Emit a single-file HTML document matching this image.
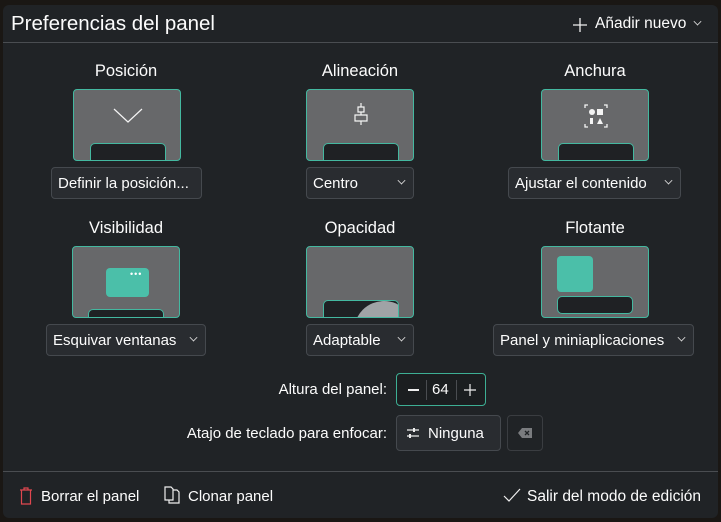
<!DOCTYPE html>
<html><head><meta charset="utf-8"><style>
*{box-sizing:border-box;margin:0;padding:0}
body{width:721px;height:522px;background:#1a1714;font-family:"Liberation Sans","DejaVu Sans",sans-serif;color:#fcfcfc;position:relative;overflow:hidden}
.win{position:absolute;left:3px;top:5px;width:715px;height:513px;background:#202326;border-radius:6px}
.abs{position:absolute}
.t{position:absolute;white-space:nowrap}
.sep{position:absolute;left:3px;width:715px;height:1px;background:#4a4d51}
.box{position:absolute;width:108px;height:72px;background:#67686a;border:1px solid #44b8a0;border-radius:4px;overflow:hidden}
.pnl{position:absolute;left:16px;width:76px;height:18px;bottom:-1px;background:#1f2124;border:1.5px solid #44b8a0;border-radius:5px 5px 0 0}
.btn{position:absolute;height:32px;background:#292c30;border:1px solid #45494e;border-radius:4px;font-size:15px;line-height:31px;padding-left:6px;white-space:nowrap}
.chev{position:absolute;right:8px;top:9px;width:7px;height:7px;border-right:1.2px solid #ddd;border-bottom:1.2px solid #ddd;transform:rotate(45deg) scale(.8)}
.lbl{font-size:16.5px;text-align:center;width:200px;margin-left:-100px}
</style></head><body>
<div class="win"></div>
<div class="t" style="left:11px;top:12px;font-size:20.5px">Preferencias del panel</div>
<svg class="abs" style="left:572px;top:17px" width="16" height="16"><path d="M8 1V15M1 8H15" stroke="#eee" stroke-width="1.3"/></svg>
<div class="t" style="left:595px;top:15px;font-size:15.5px">Añadir nuevo</div>
<div class="chev" style="left:694px;top:18px;right:auto"></div>
<div class="sep" style="top:42px"></div>

<div class="t lbl" style="left:126px;top:62px">Posición</div>
<div class="t lbl" style="left:360px;top:62px">Alineación</div>
<div class="t lbl" style="left:595px;top:62px">Anchura</div>
<div class="box" style="left:73px;top:89px"><svg class="abs" style="left:39px;top:18px" width="30" height="16"><path d="M1 1L15 14L29 1" stroke="#f4f4f4" fill="none" stroke-width="1.2"/></svg><div class="pnl"></div></div>
<div class="box" style="left:306px;top:89px"><svg class="abs" style="left:44px;top:13px" width="20" height="28"><path d="M10 0V4M7 4H13V9H7ZM10 9V12M4 12H16V18H4ZM10 18V22" stroke="#f4f4f4" fill="none" stroke-width="1.2"/></svg><div class="pnl"></div></div>
<div class="box" style="left:541px;top:89px"><svg class="abs" style="left:42px;top:14px" width="24" height="24"><path d="M1 4V1H4M20 1H23V4M1 20V23H4M20 23H23V20" stroke="#f4f4f4" fill="none" stroke-width="1.3"/><circle cx="8" cy="8" r="3" fill="#f4f4f4"/><rect x="13" y="5" width="6" height="6" fill="#f4f4f4"/><rect x="6" y="14" width="3" height="6" fill="#f4f4f4"/><path d="M13 20L16 14L19 20Z" fill="#f4f4f4"/></svg><div class="pnl"></div></div>
<div class="btn" style="left:51px;top:167px;width:151px">Definir la posición...</div>
<div class="btn" style="left:306px;top:167px;width:108px">Centro<div class="chev"></div></div>
<div class="btn" style="left:508px;top:167px;width:173px">Ajustar el contenido<div class="chev"></div></div>

<div class="t lbl" style="left:126px;top:219px">Visibilidad</div>
<div class="t lbl" style="left:360px;top:219px">Opacidad</div>
<div class="t lbl" style="left:595px;top:219px">Flotante</div>
<div class="box" style="left:72px;top:246px"><div class="abs" style="left:33px;top:21px;width:43px;height:29px;background:#4bbfa9;border-radius:4px"></div><div class="abs" style="left:57px;top:25px;font-size:9px;color:#fff;letter-spacing:1px;line-height:4px">•••</div><div class="abs" style="left:15px;top:62px;width:76px;height:12px;background:#1f2124;border:1.5px solid #44b8a0;border-radius:5px 5px 0 0"></div></div>
<div class="box" style="left:306px;top:246px"><div class="pnl" style="overflow:hidden"><div class="abs" style="left:30px;top:0;width:60px;height:60px;border-radius:50%;background:#a0a3a6"></div></div></div>
<div class="box" style="left:541px;top:246px"><div class="abs" style="left:15px;top:9px;width:36px;height:36px;background:#4bbfa9;border-radius:4px"></div><div class="abs" style="left:15px;top:49px;width:76px;height:18px;background:#1f2124;border:1.5px solid #44b8a0;border-radius:5px"></div></div>
<div class="btn" style="left:46px;top:324px;width:160px">Esquivar ventanas<div class="chev"></div></div>
<div class="btn" style="left:306px;top:324px;width:108px">Adaptable<div class="chev"></div></div>
<div class="btn" style="left:493px;top:324px;width:201px">Panel y miniaplicaciones<div class="chev"></div></div>

<div class="t" style="left:0;width:387px;text-align:right;top:381px;font-size:15px">Altura del panel:</div>
<div class="abs" style="left:396px;top:373px;width:90px;height:33px;background:#1b1e20;border:1px solid #3daf94;border-radius:4px">
<div class="abs" style="left:11px;top:15px;width:11px;height:2px;background:#eee"></div>
<div class="abs" style="left:29px;top:6px;width:1px;height:20px;background:#4a4d51"></div>
<div class="t" style="left:35px;top:7px;font-size:15px">64</div>
<div class="abs" style="left:59px;top:6px;width:1px;height:20px;background:#4a4d51"></div>
<svg class="abs" style="left:66px;top:9px" width="14" height="14"><path d="M7 1V13M1 7H13" stroke="#eee" stroke-width="1.2"/></svg></div>
<div class="t" style="left:0;width:387px;text-align:right;top:425px;font-size:15px">Atajo de teclado para enfocar:</div>
<div class="btn" style="left:396px;top:415px;width:105px;height:36px;line-height:36px;padding-left:31px">Ninguna</div>
<svg class="abs" style="left:406px;top:426px" width="14" height="14"><path d="M1 4H13M1 10H13" stroke="#eee" stroke-width="1.2"/><rect x="7" y="2" width="2" height="4" fill="#eee"/><rect x="3" y="8" width="2" height="4" fill="#eee"/></svg>
<div class="abs" style="left:507px;top:415px;width:36px;height:36px;border:1px solid #3a3d41;border-radius:4px"></div>
<svg class="abs" style="left:517px;top:427px" width="16" height="12"><path d="M5 1H15V11H5L1 6Z" fill="#7a7c7f"/><path d="M8 4L12 8M12 4L8 8" stroke="#202326" stroke-width="1.3"/></svg>

<div class="sep" style="top:471px"></div>
<svg class="abs" style="left:19px;top:487px" width="14" height="18"><path d="M1 3H13M5 3V1H9V3M2.5 3V17H11.5V3" stroke="#e0474f" fill="none" stroke-width="1.2"/></svg>
<div class="t" style="left:41px;top:488px;font-size:15px">Borrar el panel</div>
<svg class="abs" style="left:164px;top:486px" width="16" height="18"><path d="M1 1H7L9 3V14H1Z M9 4H13L15 6V17H5V14" stroke="#eee" fill="none" stroke-width="1.2"/></svg>
<div class="t" style="left:188px;top:488px;font-size:15px">Clonar panel</div>
<svg class="abs" style="left:503px;top:488px" width="18" height="14"><path d="M1 8L6 13L17 1" stroke="#eee" fill="none" stroke-width="1.2"/></svg>
<div class="t" style="left:527px;top:488px;font-size:15.5px">Salir del modo de edición</div>
</body></html>
